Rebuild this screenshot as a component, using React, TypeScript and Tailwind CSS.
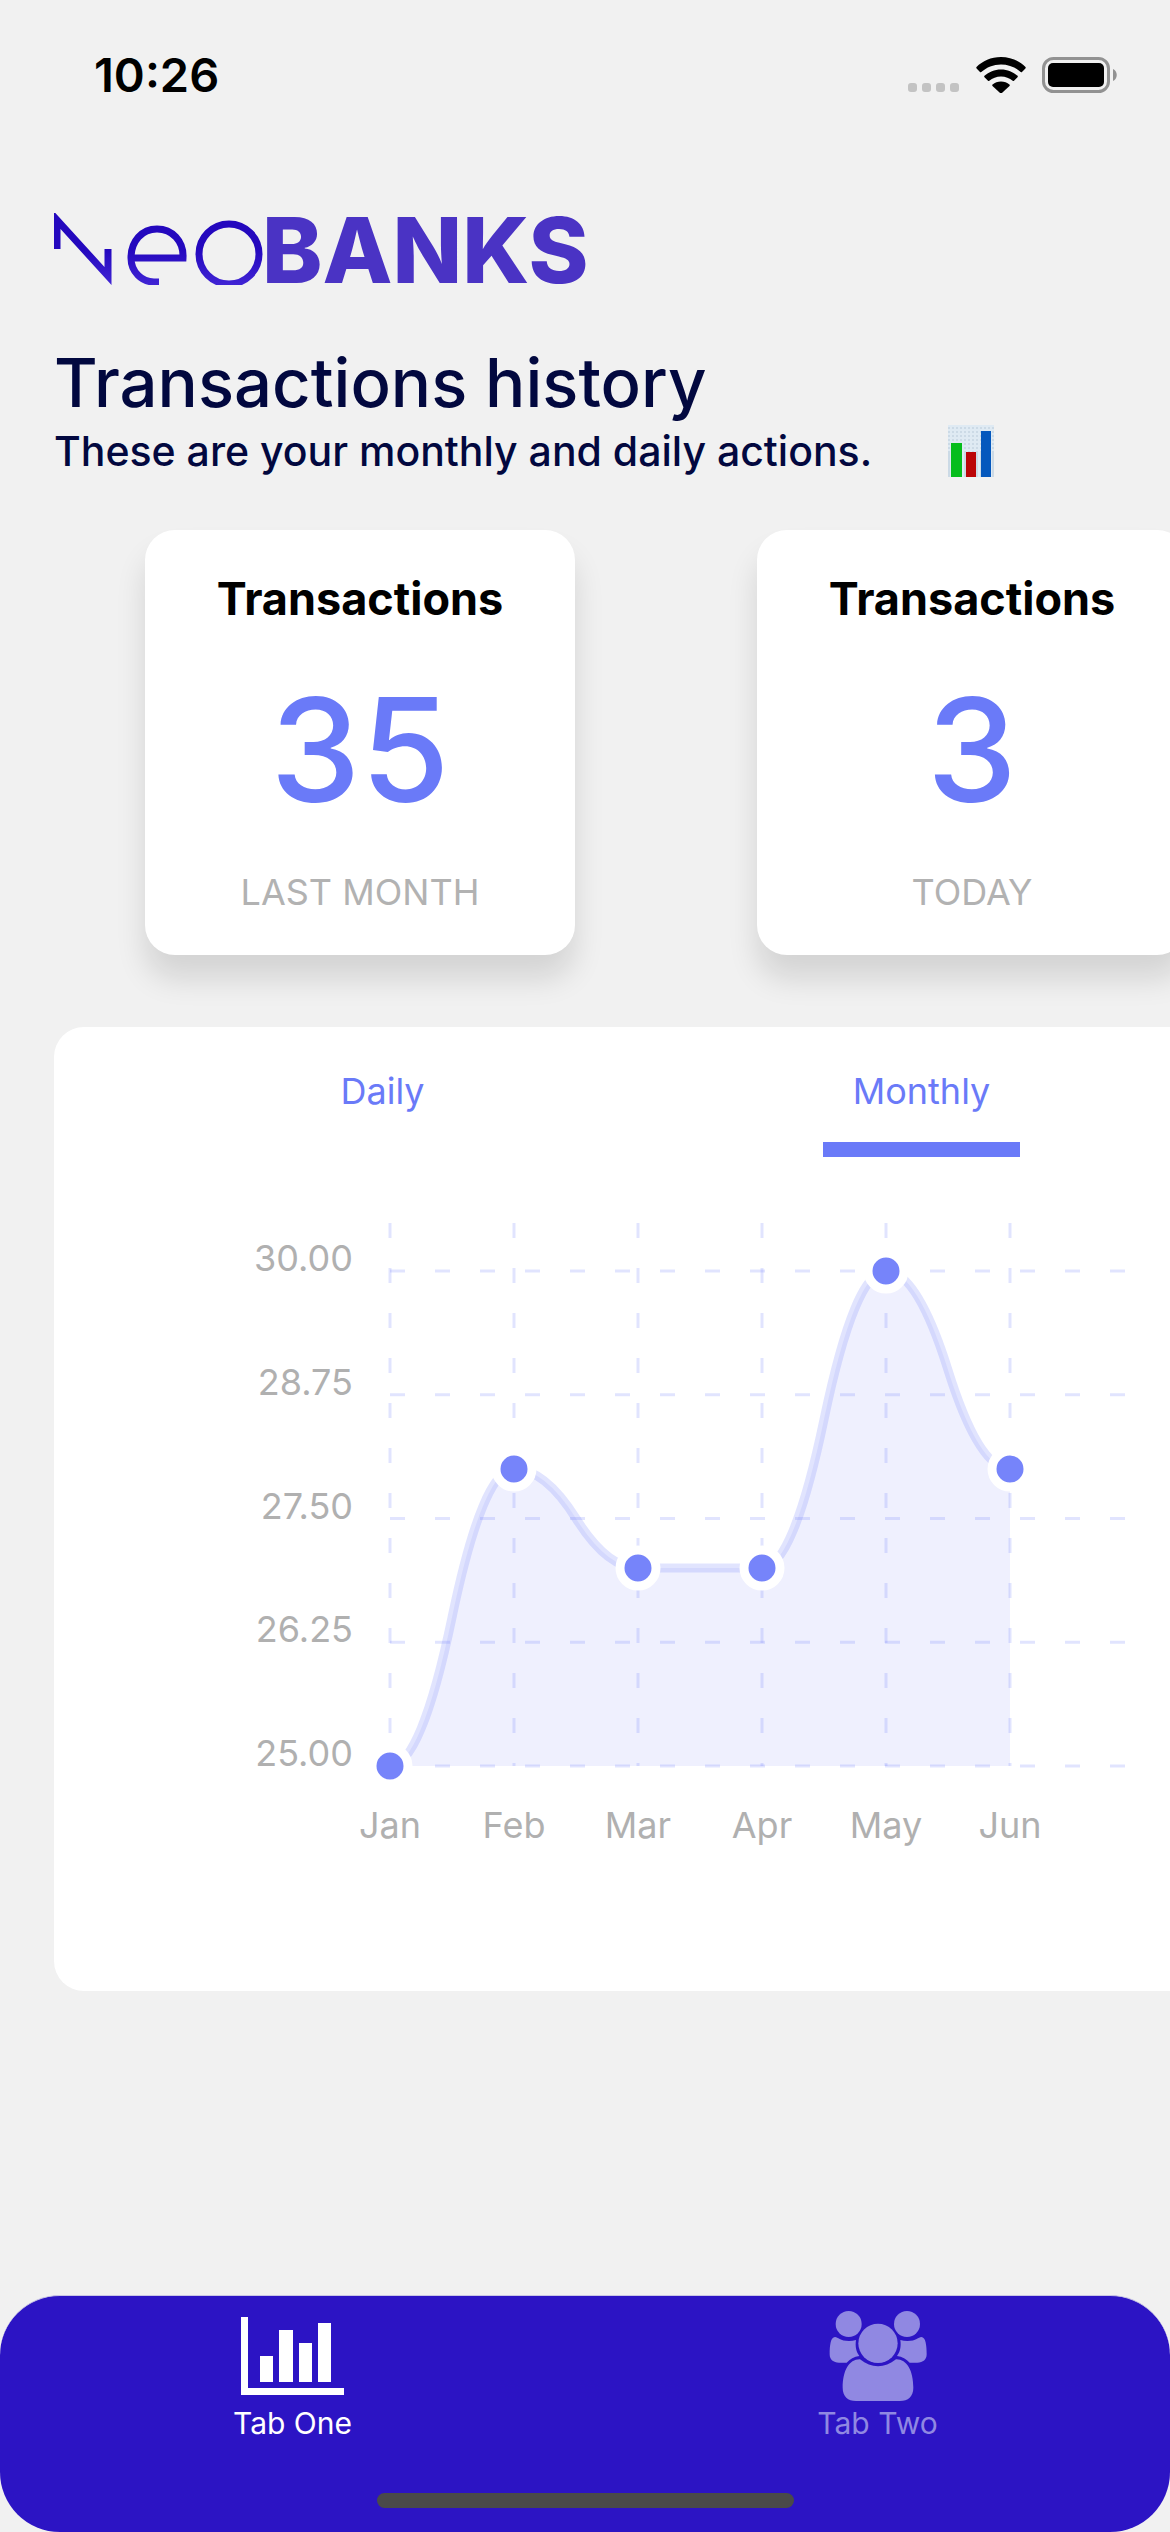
import React, { useState } from "react";

const stats = [
  { value: "35", label: "LAST MONTH" },
  { value: "3", label: "TODAY" },
];

const months = ["Jan", "Feb", "Mar", "Apr", "May", "Jun"];
const values = [25, 28, 27, 27, 30, 28];
const ticks = [30, 28.75, 27.5, 26.25, 25];

const STEP = 124;
const LEFT = 150;
const TOP = 60;
const HEIGHT = 495;
const px = (i: number) => LEFT + i * STEP;
const py = (v: number) => TOP + ((30 - v) / 5) * HEIGHT;

/** Smooth line made of two quadratic halves between neighbouring points. */
function linePath() {
  let d = `M${px(0)} ${py(values[0])}`;
  for (let i = 0; i < values.length - 1; i++) {
    const x0 = px(i);
    const x1 = px(i + 1);
    const y0 = py(values[i]);
    const y1 = py(values[i + 1]);
    const xm = (x0 + x1) / 2;
    const ym = (y0 + y1) / 2;
    d += ` Q${(xm + x0) / 2} ${y0} ${xm} ${ym} Q${(xm + x1) / 2} ${y1} ${x1} ${y1}`;
  }
  return d;
}

function StatusBar() {
  return (
    <div className="flex h-[150px] items-center justify-between pr-[52px] pl-[94px]">
      <span className="text-[47px] leading-[50px] font-semibold text-black">10:26</span>
      <div className="flex items-center gap-4">
        <svg width="52" height="36" viewBox="0 0 52 36" aria-hidden="true">
          {[0, 14, 28, 42].map((x) => (
            <rect key={x} x={x} y="26" width="9" height="9" rx="3" fill="#c3c3c3" />
          ))}
        </svg>
        <svg width="50" height="36" viewBox="0 0 50 36" aria-hidden="true">
          <path d="M25 0C35 0 43.500 4 49.500 10Q50 10.800 49.400 11.400L46 15Q45.400 15.500 44.700 15C39.500 10.200 32.500 7.400 25 7.400S10.500 10.200 5.300 15Q4.600 15.500 4 15L.600 11.400Q0 10.800.500 10C6.500 4 15 0 25 0Z" />
          <path d="M25 12.500C31.500 12.500 37.200 15 41.500 18.800Q42.200 19.500 41.500 20.200L38 23.800Q37.400 24.300 36.700 23.800C33.600 21.200 29.500 19.600 25 19.600S16.400 21.200 13.300 23.800Q12.600 24.300 12 23.800L8.500 20.200Q7.800 19.500 8.500 18.800C12.800 15 18.500 12.500 25 12.500Z" />
          <path d="M25 24.600C28.300 24.600 31.200 25.700 33.400 27.500Q34.200 28.200 33.500 28.900L25.900 36Q25 36.600 24.100 36L16.500 28.900Q15.800 28.200 16.600 27.500C18.800 25.700 21.700 24.600 25 24.600Z" />
        </svg>
        <svg width="76" height="36" viewBox="0 0 76 36" aria-hidden="true">
          <rect x="1.500" y="1.500" width="65" height="33" rx="10" fill="none" stroke="#929292" strokeWidth="3" />
          <rect x="6" y="6" width="56" height="24" rx="5" />
          <path d="M71 12C76 14 76 22 71 24Z" fill="#929292" />
        </svg>
      </div>
    </div>
  );
}

function Logo() {
  return (
    <svg width="580" height="120" viewBox="0 -24 580 120" role="img" aria-label="NeoBANKS" className="mt-[39px] block">
      <defs>
        <linearGradient id="ink" gradientUnits="userSpaceOnUse" x1="0" y1="0" x2="0" y2="72">
          <stop offset="0.5" stopColor="#2408be" />
          <stop offset="1" stopColor="#4024d4" />
        </linearGradient>
        <clipPath id="mark">
          <rect width="212" height="72" />
        </clipPath>
      </defs>
      <g fill="none" stroke="url(#ink)" strokeWidth="7" clipPath="url(#mark)">
        <polyline points="3,36 3,7 54,63 54,36" />
        <path d="M77 45H129C130 28 118 16 103 16S77 28 77 45C77 59 88 69 100 69H105" />
        <circle cx="175" cy="41" r="30" />
      </g>
      <text x="208" y="70" fontSize="91" className="font-['Inter'] font-extrabold" fill="#4a33c4">
        BANKS
      </text>
    </svg>
  );
}

function ChartEmoji() {
  return (
    <svg width="46" height="52" viewBox="0 0 46 52" role="img" aria-label="Bar chart">
      <rect width="46" height="52" fill="#ccdae6" />
      <path d="M0 1H46M0 5H46M0 9H46M0 13H46M0 17H46M0 21H46M0 25H46M3 0V52M7 0V52M11 0V52M15 0V52M19 0V52M23 0V52M27 0V52M31 0V52M35 0V52M39 0V52M43 0V52" stroke="#dfeaf3" strokeWidth="2" />
      <rect x="3" y="18" width="11" height="34" fill="#06bd1c" />
      <rect x="18" y="27" width="10" height="25" fill="#bb0508" />
      <rect x="33" y="6" width="10" height="46" fill="#0558bd" />
    </svg>
  );
}

function Chart() {
  const line = linePath();
  const base = py(25);
  return (
    <svg width="900" height="660" viewBox="0 0 900 660" role="img" aria-label="Transactions per month" className="mt-[54px] ml-[127px] block">
      <g stroke="#6a7af8" strokeOpacity="0.2" strokeWidth="3" strokeDasharray="15 30">
        {ticks.map((t) => (
          <line key={t} x1={LEFT} x2={LEFT + 745} y1={py(t)} y2={py(t)} />
        ))}
        {months.map((m, i) => (
          <line key={m} x1={px(i)} x2={px(i)} y1={12} y2={base} />
        ))}
      </g>
      <path d={`${line} V${base} H${LEFT}Z`} fill="#6a7af8" fillOpacity="0.11" />
      <path d={line} fill="none" stroke="#6a7af8" strokeOpacity="0.2" strokeWidth="9" />
      {values.map((v, i) => (
        <circle key={i} cx={px(i)} cy={py(v)} r="18" fill="#7684fa" stroke="#fff" strokeWidth="9" />
      ))}
      <g fill="#b0b0b0" fontSize="36" className="font-['Inter'] font-normal">
        {ticks.map((t) => (
          <text key={t} x={LEFT - 37} y={py(t)} textAnchor="end">
            {t.toFixed(2)}
          </text>
        ))}
        {months.map((m, i) => (
          <text key={m} x={px(i)} y={base + 72} textAnchor="middle">
            {m}
          </text>
        ))}
      </g>
    </svg>
  );
}

function BarsIcon() {
  return (
    <svg width="104" height="96" viewBox="0 0 104 96" fill="currentColor" aria-hidden="true">
      <path d="M0 9H7V80H103V87H0Z" />
      <rect x="19" y="48" width="13" height="26" />
      <rect x="38" y="22" width="14" height="52" />
      <rect x="58" y="35" width="13" height="39" />
      <rect x="77" y="15" width="13" height="59" />
    </svg>
  );
}

function PeopleIcon() {
  return (
    <svg width="104" height="96" viewBox="136 83 312 288" fill="currentColor" aria-hidden="true">
      <circle cx="204" cy="131" r="39" />
      <circle cx="379" cy="131" r="39" />
      <path d="M163 170C172 170 178 182 205 182Q216 182 226 179C223 200 227 214 236 227C220 229 208 236 198 247H175C158 247 147 238 147 222C147 195 150 170 163 170Z" />
      <path d="M422 170C413 170 407 182 380 182Q369 182 359 179C362 200 358 214 349 227C365 229 377 236 387 247H410C427 247 438 238 438 222C438 195 435 170 422 170Z" />
      <circle cx="292" cy="189" r="59" />
      <path d="M238 237C272 265 312 265 346 237C378 236 398 270 398 322C398 348 382 362 358 362H226C202 362 186 348 186 322C186 270 206 236 238 237Z" />
    </svg>
  );
}

export default function App() {
  const [period, setPeriod] = useState("Monthly");
  const [tab, setTab] = useState("Tab One");
  const tabs = [
    { name: "Tab One", Icon: BarsIcon },
    { name: "Tab Two", Icon: PeopleIcon },
  ];
  return (
    <div className="flex min-h-screen flex-col overflow-x-hidden bg-[#f1f1f1] font-['Inter',sans-serif]">
      <StatusBar />
      <main className="flex flex-col pl-[54px]">
        <Logo />
        <h1 className="mt-[32px] text-[67px] leading-[84px] font-medium text-[#02083f]">Transactions history</h1>
        <div className="flex items-center gap-[76px]">
          <p className="text-[41px] leading-[52px] font-medium text-[#02083f]">These are your monthly and daily actions.</p>
          <ChartEmoji />
        </div>

        <section className="mt-[53px] flex gap-[182px] pl-[91px]">
          {stats.map((s) => (
            <article
              key={s.label}
              className="flex w-[430px] shrink-0 flex-col items-center rounded-[30px] bg-white pt-[42px] pb-[40px] shadow-[0_24px_30px_rgba(0,0,0,0.12)]"
            >
              <h2 className="text-[45px] leading-[54px] font-bold text-black">Transactions</h2>
              <p className="mt-[37px] text-[144px] leading-[174px] font-medium text-[#6a7af8]">{s.value}</p>
              <p className="mt-[33px] text-[36px] leading-[45px] text-[#b2b2b2]">{s.label}</p>
            </article>
          ))}
        </section>

        <section className="-mr-[80px] mt-[72px] rounded-[30px] bg-white px-[59px] pt-[42px] pb-[120px]">
          <div className="grid grid-cols-2" role="tablist">
            {["Daily", "Monthly"].map((p) => (
              <button
                key={p}
                role="tab"
                aria-selected={period === p}
                onClick={() => setPeriod(p)}
                className="flex flex-col items-center gap-[28px] text-[36px] leading-[45px] text-[#6a7af8]"
              >
                {p}
                <span className={period === p ? "h-[15px] w-[197px] bg-[#6a7af8]" : "h-[15px] w-[197px]"} />
              </button>
            ))}
          </div>
          <Chart />
        </section>
      </main>

      <nav className="mt-auto flex h-[237px] flex-col items-center justify-between rounded-[60px] border-t border-[#c9c6e4] bg-[#2c14c4] pt-[12px] pb-[24px]">
        <div className="grid w-full grid-cols-2">
          {tabs.map(({ name, Icon }) => (
            <button
              key={name}
              onClick={() => setTab(name)}
              className={
                tab === name
                  ? "flex flex-col items-center text-[30px] leading-[38px] text-white"
                  : "flex flex-col items-center text-[30px] leading-[38px] text-[#9088e2]"
              }
            >
              <Icon />
              <span>{name}</span>
            </button>
          ))}
        </div>
        <div className="h-[15px] w-[417px] rounded-full bg-[#4a4a4a]" />
      </nav>
    </div>
  );
}
